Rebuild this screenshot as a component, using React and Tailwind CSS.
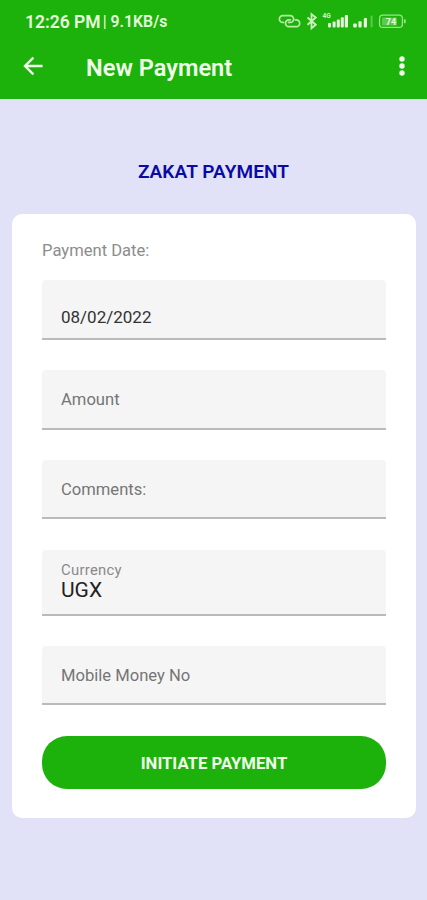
import React from "react";

const fields = [
  { id: "amount", label: "Amount", height: "h-[60px]" },
  { id: "comments", label: "Comments:", height: "h-[59px]" },
];

function StatusBar() {
  return (
    <div className="flex h-[42px] items-center justify-between pl-[25px] pr-[20px] text-[#e6fbdc]">
      <div className="flex items-center whitespace-nowrap pt-px">
        <span className="text-[17.5px] font-semibold leading-5">12:26 PM</span>
        <span className="ml-[2px] text-[16px] leading-5">|</span>
        <span className="ml-[4px] text-[15.8px] font-semibold leading-5">
          9.1KB/s
        </span>
      </div>
      <svg width="130" height="20" viewBox="277 11 130 20" fill="none">
        {/* Link */}
        <g stroke="#b9eda6" strokeWidth="1.7" strokeLinecap="round">
          <path d="M283.5 22.4h-.7a3.4 3.4 0 0 1 0-6.8h7.4a3.4 3.4 0 0 1 0 6.8h-1.6" />
          <path d="M295.3 19.8h1a3.4 3.4 0 0 1 0 6.8h-7.4a3.4 3.4 0 0 1 0-6.8h1.4" />
        </g>
        {/* Bluetooth */}
        <path
          d="M307.5 17.5l8.3 7.2-4.3 3.6V14.2l4.3 3.3-8.3 7.2"
          stroke="#c8f2b8"
          strokeWidth="1.8"
        />
        {/* Mobile signal */}
        <text
          x="322.6"
          y="18.4"
          fontSize="6.5"
          fontWeight="700"
          fill="#d6f6ca"
          fontFamily="Roboto, sans-serif"
        >
          4G
        </text>
        <g fill="#e2fad8">
          <rect x="328" y="23" width="3" height="4.4" rx="1" />
          <rect x="332.6" y="21.4" width="3" height="6" rx="1" />
          <rect x="336.8" y="19.4" width="3" height="8" rx="1" />
          <rect x="340.8" y="17.2" width="3" height="10.2" rx="1" />
          <rect x="344.8" y="15" width="3.2" height="12.4" rx="1" />
          <rect x="353.2" y="23.6" width="3.6" height="3.8" rx="1" />
          <rect x="358.4" y="21.2" width="3.2" height="6.2" rx="1" />
          <rect x="363.8" y="18" width="3.2" height="9.4" rx="1" />
        </g>
        <rect x="370.6" y="15.4" width="2" height="12" rx="1" fill="#5dcb4c" />
        {/* Battery */}
        <rect x="382" y="17.4" width="15" height="8" rx="1" fill="#5dcb4c" />
        <rect
          x="379.6"
          y="15.2"
          width="22.8"
          height="12.2"
          rx="3.2"
          stroke="#9be389"
          strokeWidth="1.3"
        />
        <path d="M404.8 19.4v3.8" stroke="#9be389" strokeWidth="1.8" />
        <text
          x="385.8"
          y="24.6"
          fontSize="9"
          fontWeight="700"
          fill="#e6fbdc"
          fontFamily="Roboto, sans-serif"
        >
          74
        </text>
      </svg>
    </div>
  );
}

function AppBar() {
  return (
    <div className="flex h-[50px] items-center pl-[23px] pr-[18px]">
      <button aria-label="Back" className="-mt-[2px] text-[#f0fdea]">
        <svg width="21" height="20" viewBox="0 0 21 20" fill="none">
          <path
            d="M19.6 10H2M10.4 1.6L2 10l8.4 8.4"
            stroke="currentColor"
            strokeWidth="2.4"
          />
        </svg>
      </button>
      <h1 className="ml-[42px] whitespace-nowrap pt-[2px] text-[23.6px] font-semibold leading-8 text-[#f0fdea]">
        New Payment
      </h1>
      <button aria-label="More" className="-mt-[2px] ml-auto">
        <svg width="14" height="22" viewBox="0 0 14 22" fill="#f0fdea">
          <circle cx="7" cy="4" r="2.7" />
          <circle cx="7" cy="11" r="2.7" />
          <circle cx="7" cy="18" r="2.7" />
        </svg>
      </button>
    </div>
  );
}

function Field({ label, height }) {
  return (
    <div
      className={`${height} flex items-center rounded-t-[4px] border-b-2 border-[#bababa] bg-[#f5f5f5] pl-[19px] pt-[4px] text-[16.6px] text-[#757575]`}
    >
      {label}
    </div>
  );
}

function App() {
  return (
    <div className="flex h-[900px] w-[427px] flex-col bg-[#e1e2f7] font-['Roboto',sans-serif]">
      <header className="h-[98.5px] bg-[#1db10c]">
        <StatusBar />
        <AppBar />
      </header>

      <h2 className="mt-[59px] text-center text-[19px] font-semibold leading-7 tracking-[0.1px] text-[#0a0aa5]">
        ZAKAT PAYMENT
      </h2>

      <main className="ml-[12px] mr-[11px] mt-[28px] h-[604px] rounded-[10px] bg-white px-[30px] pt-[25px]">
        <p className="text-[16.6px] leading-6 text-[#8c8c8c]">Payment Date:</p>

        <div className="mt-[17px] flex h-[60px] items-end rounded-t-[4px] border-b-2 border-[#bababa] bg-[#f5f5f5] pb-[9px] pl-[19px] text-[17px] leading-6 text-[#333]">
          08/02/2022
        </div>

        <div className="mt-[30px] space-y-[30px]">
          {fields.map((field) => (
            <Field key={field.id} label={field.label} height={field.height} />
          ))}
        </div>

        {/* Currency */}
        <div className="mt-[31px] h-[66px] rounded-t-[4px] border-b-2 border-[#bababa] bg-[#f5f5f5] pl-[19px] pt-[12px]">
          <p className="text-[14.8px] leading-[17px] tracking-[0.3px] text-[#8a8a8a]">
            Currency
          </p>
          <p className="-mt-px text-[21px] leading-6 text-[#222]">UGX</p>
        </div>

        <div className="mt-[30px]">
          <Field label="Mobile Money No" height="h-[59px]" />
        </div>

        <button className="mt-[31px] h-[53px] w-full rounded-[25px] bg-[#1db10c] pt-[3px] text-[16.7px] font-bold text-[#f0fdea]">
          INITIATE PAYMENT
        </button>
      </main>
    </div>
  );
}

export default App;
